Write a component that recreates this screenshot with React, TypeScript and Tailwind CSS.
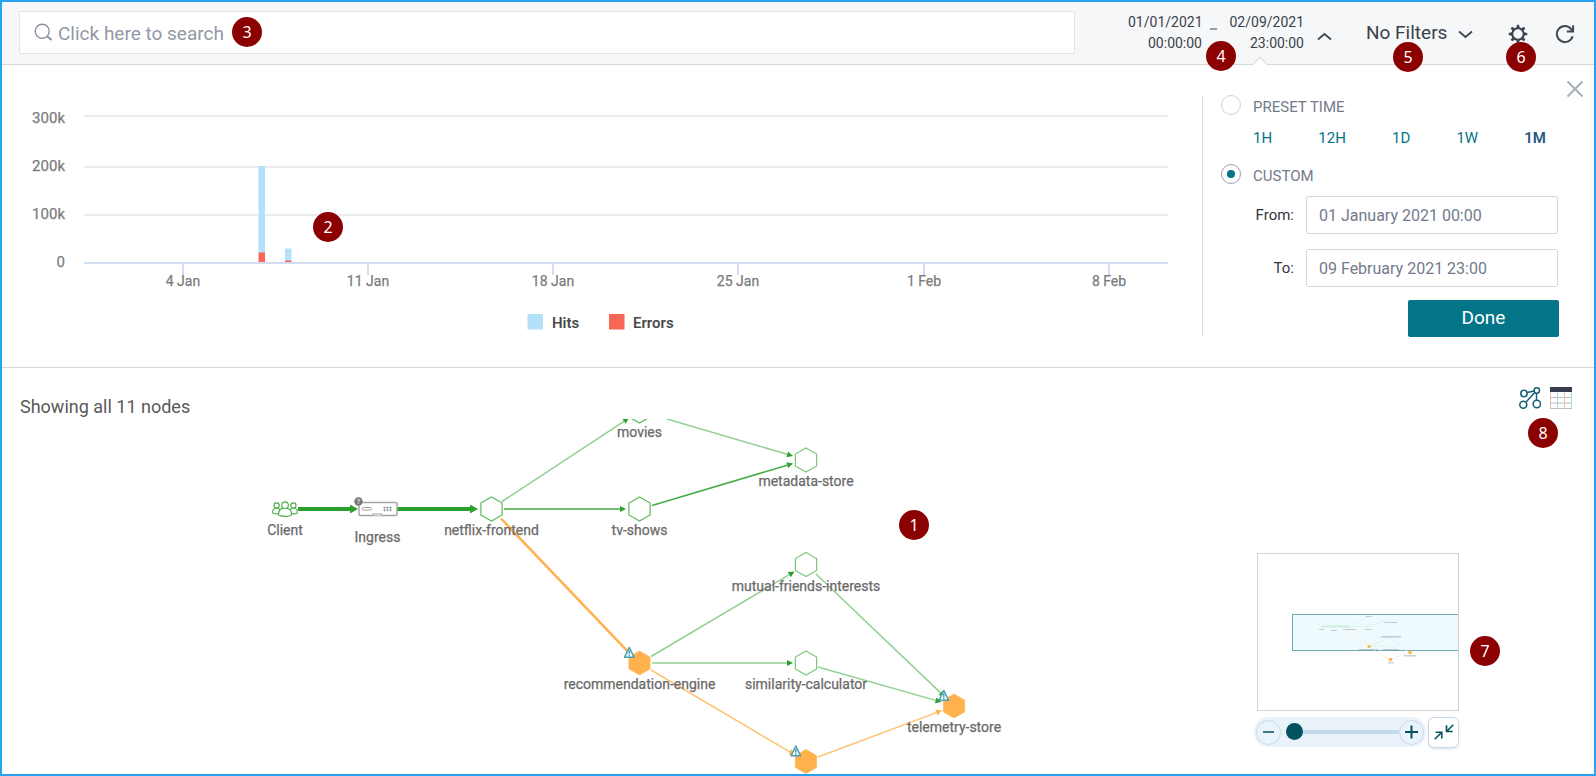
import React from "react";

type Point = [number, number];

function Badge({ n, className }: { n: number; className: string }) {
  return (
    <span
      className={`pointer-events-none absolute z-10 flex size-[30px] items-center justify-center rounded-full bg-[#8b0000] font-['Noto_Sans'] text-base leading-none text-white ${className}`}
    >
      {n}
    </span>
  );
}

function Chevron({ up = false }: { up?: boolean }) {
  return (
    <svg width="15" height="9" viewBox="0 0 15 9" fill="none" stroke="#3f4654" strokeWidth="1.8" aria-hidden="true">
      <path d={up ? "M1 7.500 7.500 2 14 7.500" : "M1 1.500 7.500 7 14 1.500"} />
    </svg>
  );
}

function GearIcon() {
  const teeth = [0, 45, 90, 135, 180, 225, 270, 315];
  return (
    <svg width="20" height="20" viewBox="0 0 20 20" aria-hidden="true">
      <circle cx="10" cy="10" r="5.7" fill="none" stroke="#3f4654" strokeWidth="2" />
      {teeth.map((a) => (
        <path key={a} d="M8.1 4.2 9 .7h2l.9 3.5z" fill="#3f4654" transform={`rotate(${a} 10 10)`} />
      ))}
    </svg>
  );
}

function RefreshIcon() {
  return (
    <svg width="20" height="20" viewBox="0 0 20 20" fill="none" stroke="#3f4654" strokeWidth="2" aria-hidden="true">
      <path d="M17.6 12.2A8 8 0 1 1 16.2 5.2L18 7.4" />
      <path d="M18.1 1.2v6.3h-6.3" />
    </svg>
  );
}

function Header() {
  return (
    <header className="relative flex h-[63px] shrink-0 items-start border-b border-[#d3d5d9] bg-[#f6f7f9] pl-[17px] text-[#3b3f49]">
      <label className="relative mt-[9px] flex h-[43px] min-w-0 flex-1 items-center border border-[#e2e4e6] bg-white pl-3.5">
        <svg width="19" height="19" viewBox="0 0 19 19" fill="none" stroke="#8b92a0" strokeWidth="1.4" aria-hidden="true">
          <circle cx="8.2" cy="8.2" r="7" />
          <path d="m13 13.2 4.6 3.8" strokeWidth="2" />
        </svg>
        <input
          type="text"
          aria-label="Search"
          placeholder="Click here to search"
          className="ml-[5px] h-full min-w-0 flex-1 bg-transparent pt-0.5 text-[19px] outline-none placeholder:text-[#9398a6]"
        />
        <Badge n={3} className="left-[212px] top-[5px]" />
      </label>
      <div className="flex w-[519px] shrink-0 items-start pl-[53px]">
        <div className="relative">
          <button type="button" className="flex w-[204px] items-start pt-2.5 text-right text-sm leading-[21px]">
            <span className="w-[74px]">
              01/01/2021
              <br />
              00:00:00
            </span>
            <span className="mx-2 mt-4 h-0.5 w-2 bg-[#9a9da3]" />
            <span className="w-[86px]">
              02/09/2021
              <br />
              23:00:00
            </span>
            <span className="ml-[13px] mt-5">
              <Chevron up />
            </span>
          </button>
          <Badge n={4} className="left-[78px] top-[39px]" />
          <span className="absolute left-[126px] top-[57px] size-3 rotate-45 border-l border-t border-[#d3d5d9] bg-white" />
        </div>
        <div className="relative ml-[34px]">
          <button type="button" className="flex w-[107px] items-center justify-between pt-[17px] text-[19px] leading-7">
            No Filters
            <span className="pt-0.5">
              <Chevron />
            </span>
          </button>
          <Badge n={5} className="left-[27px] top-10" />
        </div>
        <div className="relative ml-[35px] pt-[22px]">
          <button type="button" aria-label="Settings" className="block">
            <GearIcon />
          </button>
          <Badge n={6} className="-left-0.5 top-10" />
        </div>
        <button type="button" aria-label="Refresh" className="ml-[27px] mt-[22px]">
          <RefreshIcon />
        </button>
      </div>
      <span className="absolute right-[325px] top-[63px] h-2 w-5 bg-white" />
    </header>
  );
}

const yTicks = [
  { label: "300k", y: 18 },
  { label: "200k", y: 69 },
  { label: "100k", y: 117 },
  { label: "0", y: 165 },
];
const xTicks = [
  { label: "4 Jan", x: 181 },
  { label: "11 Jan", x: 366 },
  { label: "18 Jan", x: 551 },
  { label: "25 Jan", x: 736 },
  { label: "1 Feb", x: 922 },
  { label: "8 Feb", x: 1107 },
];

function HitsChart() {
  return (
    <div className="relative min-w-0 flex-1 pt-0.5">
      <svg viewBox="0 0 1200 240" className="block w-full" role="img" aria-label="Hits and errors over time">
        {yTicks.map((t) => (
          <g key={t.label}>
            <rect x="82" y={t.y} width="1084" height="2" fill={t.label === "0" ? "#d3dcf0" : "#ebebec"} />
            <text x="63" y={t.label === "300k" ? 26 : t.y + 5} textAnchor="end" fontSize="15" fill="#7b7b7b" stroke="#7b7b7b" strokeWidth=".25">
              {t.label}
            </text>
          </g>
        ))}
        {xTicks.map((t) => (
          <g key={t.label}>
            <rect x={t.x - 1} y="167" width="2" height="11" fill="#d3dcf0" />
            <text x={t.x} y="189" textAnchor="middle" fontSize="14" fill="#7b7b7b" stroke="#7b7b7b" strokeWidth=".25">
              {t.label}
            </text>
          </g>
        ))}
        <rect x="256.5" y="69" width="6.5" height="87" fill="#b3e1fa" />
        <rect x="256.5" y="155.500" width="6.5" height="9.500" fill="#f96655" />
        <rect x="283" y="151.500" width="6.5" height="13" fill="#b3e1fa" />
        <rect x="283" y="163.500" width="6.5" height="1.5" fill="#f96655" />
        <rect x="525.500" y="217" width="15.500" height="15.500" fill="#b3e1fa" />
        <text x="550" y="231" fontSize="15" fontWeight="600" fill="#4a4a4a">
          Hits
        </text>
        <rect x="607" y="217" width="15.500" height="15.500" fill="#f96655" />
        <text x="631" y="231" fontSize="15" fontWeight="600" fill="#4a4a4a">
          Errors
        </text>
      </svg>
      <Badge n={2} className="left-[311px] top-[117px]" />
    </div>
  );
}

const radioClass =
  "relative size-5 shrink-0 appearance-none rounded-full border border-[#cfd1d6] bg-white checked:border-[#9aa1b3] checked:before:absolute checked:before:inset-[5px] checked:before:rounded-full checked:before:bg-[#047489] checked:before:content-['']";

function DateField({ id, label, value }: { id: string; label: string; value: string }) {
  return (
    <div className="flex items-center justify-end">
      <label htmlFor={id} className="mr-3 text-[15px] text-[#33363f]">
        {label}
      </label>
      <input
        id={id}
        type="text"
        defaultValue={value}
        className="mr-px h-[38px] w-[252px] rounded-xs border border-[#d6d8dc] bg-white px-3 text-base text-[#727a8c] outline-none"
      />
    </div>
  );
}

function TimePanel() {
  return (
    <section className="relative flex shrink-0 border-b border-[#d3d5d9] pb-[30px] pt-[30px]">
      <HitsChart />
      <form className="w-[392px] shrink-0 border-l border-[#dcdee2] pl-[18px] pr-[35px] text-[#737b8b]">
        <label className="flex h-5 items-center gap-3 text-[15px]">
          <input type="radio" name="range" className={radioClass} />
          <span className="pt-1">PRESET TIME</span>
        </label>
        <div className="mt-[13px] flex h-5 items-center justify-between pl-8 pr-[13px] text-[15px] text-[#047489]">
          <button type="button">1H</button>
          <button type="button">12H</button>
          <button type="button">1D</button>
          <button type="button">1W</button>
          <button type="button" className="font-semibold text-[#25597f]">
            1M
          </button>
        </div>
        <label className="mt-4 flex h-5 items-center gap-3 text-[15px]">
          <input type="radio" name="range" defaultChecked className={radioClass} />
          <span className="pt-1">CUSTOM</span>
        </label>
        <div className="mt-3 flex flex-col gap-[15px]">
          <DateField id="from" label="From:" value="01 January 2021 00:00" />
          <DateField id="to" label="To:" value="09 February 2021 23:00" />
        </div>
        <button type="submit" className="ml-auto mt-[13px] block h-[37px] w-[151px] rounded-xs bg-[#047489] text-[19px] text-white">
          Done
        </button>
      </form>
      <button type="button" aria-label="Close" className="absolute right-2.5 top-[15px]">
        <svg width="18" height="18" viewBox="0 0 18 18" stroke="#a9afbd" strokeWidth="2" aria-hidden="true">
          <path d="m1.500 1.500 15 15m0-15-15 15" />
        </svg>
      </button>
    </section>
  );
}

const GREEN = "#2ca02c";
const SOFT = "#93cf93";
const ORANGE = "#ffb14d";

const edges: { from: Point; to: Point; line: string; head: string; w: number }[] = [
  { from: [298, 509], to: [358, 509], line: GREEN, head: GREEN, w: 4 },
  { from: [397, 509], to: [478, 509], line: GREEN, head: GREEN, w: 4 },
  { from: [502, 501.500], to: [629, 418], line: SOFT, head: GREEN, w: 1.5 },
  { from: [504, 509], to: [626, 509], line: "#45ab45", head: GREEN, w: 1.5 },
  { from: [501, 518.500], to: [632, 656], line: ORANGE, head: ORANGE, w: 2.5 },
  { from: [667, 419], to: [793, 456], line: SOFT, head: GREEN, w: 1.5 },
  { from: [652, 505.500], to: [793, 463.500], line: "#45ab45", head: GREEN, w: 1.5 },
  { from: [651, 656.500], to: [794.500, 571.500], line: SOFT, head: GREEN, w: 1.5 },
  { from: [652, 663], to: [793, 663], line: SOFT, head: GREEN, w: 1.5 },
  { from: [651, 670], to: [795, 755], line: "#ffc274", head: ORANGE, w: 1.5 },
  { from: [816, 574], to: [945, 697], line: SOFT, head: GREEN, w: 1.5 },
  { from: [818, 667], to: [941.500, 702], line: SOFT, head: GREEN, w: 1.5 },
  { from: [818, 757], to: [942, 710.500], line: "#ffc274", head: ORANGE, w: 1.5 },
];

const nodes: { name: string; at: Point; alert?: boolean; soft?: boolean }[] = [
  { name: "netflix-frontend", at: [491.500, 509] },
  { name: "movies", at: [639.500, 411] },
  { name: "tv-shows", at: [639.500, 509] },
  { name: "metadata-store", at: [806, 460], soft: true },
  { name: "mutual-friends-interests", at: [806, 564.500], soft: true },
  { name: "recommendation-engine", at: [639.500, 663], alert: true },
  { name: "similarity-calculator", at: [806, 663], soft: true },
  { name: "telemetry-store", at: [954, 706], alert: true },
  { name: "rating", at: [806, 761.500], alert: true },
];

function Edge({ from, to, line, head, w }: (typeof edges)[number]) {
  const dx = to[0] - from[0];
  const dy = to[1] - from[1];
  const len = Math.hypot(dx, dy);
  const angle = (Math.atan2(dy, dx) * 180) / Math.PI;
  const size = w > 3 ? 8 : 6;
  const half = w > 3 ? 4.5 : 3;
  return (
    <g transform={`translate(${from[0]} ${from[1]}) rotate(${angle})`}>
      <path d={`M0 0H${len - size}`} stroke={line} strokeWidth={w} />
      <path d={`M${len - size} ${-half}L${len} 0L${len - size} ${half}z`} fill={head} />
    </g>
  );
}

function NodeShape({ at: [x, y], alert, soft }: (typeof nodes)[number]) {
  return (
    <g transform={`translate(${x} ${y})`}>
      <path
        d="M0-12 10.600-6V6L0 12-10.600 6V-6z"
        fill={alert ? ORANGE : "#fff"}
        stroke={alert ? ORANGE : soft ? "#7cc67c" : "#5cb85c"}
        strokeWidth={alert ? 0.6 : 1.2}
      />
      {alert && (
        <g transform="translate(-10.200 -10.500)">
          <path d="M0-5 4.800 4.800H-4.800z" fill="#fff" stroke="#4b9db0" strokeWidth="1.5" strokeLinejoin="round" />
          <path d="M0-2v3.800m0 .8v1.200" stroke="#4b9db0" strokeWidth="1.500" />
        </g>
      )}
    </g>
  );
}

function Label({ x, y, children }: { x: number; y: number; children: string }) {
  return (
    <text x={x} y={y} textAnchor="middle" fontSize="14" fill="#6a6a6a" stroke="#6a6a6a" strokeWidth=".25">
      {children}
    </text>
  );
}

function ClientIcon() {
  return (
    <g transform="translate(272 501)" fill="#fff" stroke="#45ab45" strokeWidth="1.100">
      <path d="M.6 11.500c0-3 1.600-4.500 4-4.500s4 1.500 4 4.500c0 1.800-8 1.800-8 0z" />
      <circle cx="4.600" cy="4.500" r="2.600" />
      <path d="M17.400 11.500c0-3 1.600-4.500 4-4.500s4 1.500 4 4.500c0 1.800-8 1.800-8 0z" />
      <circle cx="21.400" cy="4.500" r="2.600" />
      <path d="M6.500 13.500c0-4.200 2.600-6.500 6.500-6.500s6.500 2.300 6.500 6.500c0 2.500-13 2.500-13 0z" />
      <circle cx="13" cy="4.200" r="3.300" />
    </g>
  );
}

function IngressIcon() {
  return (
    <g fill="#fff" stroke="#a3a3a3" strokeWidth="1.400">
      <rect x="359" y="502.500" width="38" height="13" rx="1" />
      <rect x="362.500" y="507.500" width="9" height="2.600" rx="1" strokeWidth="1" />
      <path d="M373.500 515.500v-1.500h8v1.500" strokeWidth="1.200" />
      <path d="M383 507.500h9m-9 2.500h9m-7.500-3.500v5m3-5v5m3-5v5" strokeWidth=".9" />
      <circle cx="358.500" cy="501.500" r="4.200" fill="#777" stroke="none" />
      <text x="358.500" y="504" textAnchor="middle" fontSize="7" fontWeight="700" fill="#ddd" stroke="none">
        ?
      </text>
    </g>
  );
}

function ServiceGraph() {
  return (
    <svg className="absolute left-0 top-0 h-full w-full" role="img" aria-label="Service graph">
      <g transform="translate(-2 -419)">
        {edges.map((e, i) => (
          <Edge key={i} {...e} />
        ))}
        <ClientIcon />
        <IngressIcon />
        <Label x={285} y={535}>Client</Label>
        <Label x={377.500} y={542}>Ingress</Label>
        {nodes.map((n) => (
          <React.Fragment key={n.name}>
            <NodeShape {...n} />
            {n.name !== "rating" && (
              <Label x={n.at[0]} y={n.at[1] + 26}>
                {n.name}
              </Label>
            )}
          </React.Fragment>
        ))}
      </g>
    </svg>
  );
}

function MiniMap() {
  return (
    <div className="absolute bottom-[26px] right-[135px] z-10 w-[205px]">
      <div className="relative ml-[3px] h-[158px] border border-[#d3d3d3] bg-white">
        <svg width="200" height="156" viewBox="0 0 200 156" aria-hidden="true" className="block">
          <rect x="34.500" y="60.500" width="168" height="36" fill="#effaff" stroke="#6aaab8" />
          <g fill="none" strokeWidth="1">
            <path d="M63 72.500h29" stroke="#cdeed9" strokeWidth="2" />
            <path d="M93 72 110 62M93 72.500h17l20-7M112 92l20-9 17 14M112 92h20" stroke="#dff3e6" />
            <path d="m94 74 17 19 21 13 19-8" stroke="#fdeed8" />
          </g>
          <g fill="#7d8a8f" fillOpacity=".4">
            <rect x="61" y="75" width="5" height="1" />
            <rect x="73" y="76" width="6" height="1" />
            <rect x="85" y="75" width="13" height="1" />
            <rect x="108" y="62" width="6" height="1" />
            <rect x="107" y="75" width="7" height="1" />
            <rect x="126" y="68" width="13" height="1" />
            <rect x="123" y="82" width="20" height="1.500" />
            <rect x="101" y="95" width="19" height="1.500" />
            <rect x="125" y="95" width="16" height="1.500" />
            <rect x="146" y="101" width="12" height="1.500" />
            <rect x="130" y="108" width="6" height="1.500" />
          </g>
          <g fill={ORANGE}>
            <circle cx="111" cy="92.500" r="1.600" />
            <circle cx="152" cy="98.500" r="1.800" />
            <circle cx="132.500" cy="105.500" r="1.800" />
          </g>
        </svg>
        <Badge n={7} className="left-[212px] top-[82px]" />
      </div>
      <div className="mt-[5px] flex h-8 items-center">
        <div className="flex h-[30px] min-w-0 flex-1 items-center rounded-full bg-[#ebf3fa] px-0.5">
          <button type="button" aria-label="Zoom out" className="flex size-[25px] shrink-0 items-center justify-center rounded-full border border-[#c5dbef]">
            <svg width="13" height="13" viewBox="0 0 13 13" stroke="#02525f" strokeWidth="1.500" aria-hidden="true">
              <path d="M1 6h11" />
            </svg>
          </button>
          <input
            type="range"
            aria-label="Zoom level"
            min="0"
            max="100"
            defaultValue="0"
            className="ml-[5px] h-[17px] w-0 min-w-0 flex-1 appearance-none bg-transparent [&::-webkit-slider-runnable-track]:h-1 [&::-webkit-slider-runnable-track]:rounded-full [&::-webkit-slider-runnable-track]:bg-[#c2d8ec] [&::-webkit-slider-thumb]:-mt-[7px] [&::-webkit-slider-thumb]:size-[17px] [&::-webkit-slider-thumb]:appearance-none [&::-webkit-slider-thumb]:rounded-full [&::-webkit-slider-thumb]:bg-[#02525f]"
          />
          <button type="button" aria-label="Zoom in" className="flex size-[25px] shrink-0 items-center justify-center rounded-full border border-[#c5dbef]">
            <svg width="15" height="15" viewBox="0 0 15 15" stroke="#02525f" strokeWidth="2" aria-hidden="true">
              <path d="M1 7h13M7.500.500v13" />
            </svg>
          </button>
        </div>
        <button type="button" aria-label="Fit to view" className="ml-0.5 flex size-[31px] shrink-0 items-center justify-center rounded-md border border-[#c5dbef] bg-white shadow-sm">
          <svg width="20" height="16" viewBox="0 0 20 16" fill="none" stroke="#02525f" strokeWidth="1.600" aria-hidden="true">
            <path d="m.7 15.300 6.800-6.800M1.600 8.200h6.200v6.200M19.300.700 12.800 7.200M12.500 1.200v6.300h6.200" />
          </svg>
        </button>
      </div>
    </div>
  );
}

function Topology() {
  return (
    <main className="flex min-h-[405px] flex-1 flex-col">
      <div className="relative flex h-[51px] shrink-0 items-start justify-between pl-[18px] pr-[22px]">
        <h1 className="pt-[25px] text-[18px] leading-7 text-[#595959]">Showing all 11 nodes</h1>
        <div className="flex gap-[9px] pt-[19px]">
          <button type="button" aria-label="Graph view">
            <svg width="22" height="22" viewBox="0 0 22 22" fill="none" stroke="#155f77" strokeWidth="1.500" aria-hidden="true">
              <circle cx="5" cy="6.500" r="3.200" />
              <circle cx="17.800" cy="3.500" r="2.700" />
              <circle cx="4.300" cy="17.800" r="3.500" />
              <circle cx="17.800" cy="17" r="3.700" />
              <path d="m8.200 5.500 7-1.500M15.800 5.500 6.800 15.200M17.500 6.200v7" />
            </svg>
          </button>
          <button type="button" aria-label="Table view">
            <svg width="22" height="22" viewBox="0 0 22 22" fill="none" aria-hidden="true">
              <path d="M0 0h22v5H0z" fill="#363d4c" />
              <path d="M0 10.500h22M0 16h22M0 21.500h22" stroke="#b9bcc2" />
              <path d="M.500 5v16.500M14.500 5v16.500" stroke="#f0b9b4" />
              <path d="M7.500 5v16.500M21.500 5v16.500" stroke="#a9dbe3" />
            </svg>
          </button>
        </div>
        <Badge n={8} className="right-9 top-[50px]" />
      </div>
      <div className="relative flex-1">
        <ServiceGraph />
        <Badge n={1} className="left-[897px] top-[91px]" />
        <MiniMap />
      </div>
    </main>
  );
}

export default function App() {
  return (
    <div className="flex min-h-screen flex-col border-2 border-[#27a1f2] bg-white font-[Roboto,'Liberation_Sans',sans-serif]">
      <Header />
      <TimePanel />
      <Topology />
    </div>
  );
}
